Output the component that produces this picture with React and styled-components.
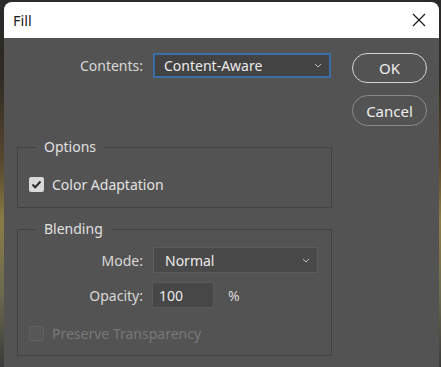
import React from "react";
import styled, { createGlobalStyle } from "styled-components";

const GlobalStyle = createGlobalStyle`
  html, body {
    margin: 0;
    padding: 0;
    height: 100%;
  }
  body {
    background: linear-gradient(180deg, #2a2a2a 0%, #2e2a24 20%, #5a4a30 45%, #8a7c46 60%, #6b6a50 80%, #3a3a3a 100%);
    font-family: "Noto Sans", "Open Sans", sans-serif;
    overflow: hidden;
  }
`;

const Dialog = styled.div`
  margin: 2px 2px 0 4px;
  height: 365px;
  display: flex;
  flex-direction: column;
  border-radius: 8px 8px 0 0;
  overflow: hidden;
  background: #535353;
`;

const TitleBar = styled.div`
  height: 36px;
  flex: none;
  background: #ffffff;
  display: flex;
  align-items: center;
  justify-content: space-between;
  padding: 0 13px 0 9px;
  font-size: 14.5px;
  color: #1c1c1c;
`;

const CloseButton = styled.button`
  border: none;
  background: none;
  padding: 0;
  width: 14px;
  height: 14px;
  display: flex;
  cursor: pointer;
`;

const Body = styled.div`
  flex: 1;
  display: flex;
  padding: 15px 12px 0 13px;
  gap: 20px;
`;

const LeftCol = styled.div`
  width: 315px;
  display: flex;
  flex-direction: column;
`;

const RightCol = styled.div`
  width: 75px;
  display: flex;
  flex-direction: column;
  gap: 12px;
`;

const Row = styled.div`
  display: flex;
  align-items: center;
  height: ${(p) => p.$h || 26}px;
  margin-top: ${(p) => p.$mt || 0}px;
`;

const Label = styled.span`
  width: ${(p) => p.$w}px;
  margin-right: ${(p) => p.$gap || 10}px;
  text-align: right;
  font-size: 14px;
  color: #d8d8d8;
`;

const Select = styled.div`
  box-sizing: border-box;
  width: ${(p) => p.$w}px;
  height: ${(p) => p.$h}px;
  display: flex;
  align-items: center;
  justify-content: space-between;
  padding: 0 7px 0 ${(p) => (p.$focus ? 9 : 11)}px;
  background: ${(p) => (p.$focus ? "#434343" : "#494949")};
  border: ${(p) => (p.$focus ? "2px solid #3b6ea6" : "1px solid #5c5c5c")};
  font-size: 14px;
  color: #ececec;
`;

const NumberField = styled.div`
  box-sizing: border-box;
  width: 62px;
  height: 26px;
  display: flex;
  align-items: center;
  padding-left: 6px;
  background: #474747;
  border: 1px solid #5a5a5a;
  font-size: 14px;
  color: #ececec;
`;

const Unit = styled.span`
  margin-left: 14px;
  font-size: 14px;
  color: #d8d8d8;
`;

const PillButton = styled.button`
  box-sizing: border-box;
  width: 75px;
  height: ${(p) => p.$h}px;
  border-radius: 16px;
  background: transparent;
  border: ${(p) => (p.$primary ? "1.5px solid #d4d4d4" : "1px solid #8a8a8a")};
  color: #eeeeee;
  font-family: inherit;
  font-size: 15px;
  padding: 0;
  cursor: pointer;
`;

const Group = styled.fieldset`
  margin: ${(p) => p.$mt}px 0 0;
  padding: 0 0 0 11px;
  border: 1px solid #424242;
  height: ${(p) => p.$h}px;
  box-sizing: border-box;
  display: flex;
  flex-direction: column;
`;

const Legend = styled.legend`
  margin-left: 7px;
  padding: 0 8px;
  font-size: 14px;
  line-height: 20px;
  color: #e0e0e0;
`;

const CheckRow = styled.label`
  display: flex;
  align-items: center;
  gap: 8px;
  margin-top: ${(p) => p.$mt}px;
  font-size: 14px;
  color: ${(p) => (p.$disabled ? "#787878" : "#e2e2e2")};
`;

const Box = styled.span`
  box-sizing: border-box;
  width: 15px;
  height: 15px;
  border-radius: 2px;
  display: flex;
  align-items: center;
  justify-content: center;
  background: ${(p) => (p.$checked ? "#d9d9d9" : "#575757")};
  border: ${(p) => (p.$checked ? "none" : "1px solid #606060")};
`;

const Chevron = () => (
  <svg width="8" height="5" viewBox="0 0 8 5">
    <polyline points="1,1 4,4 7,1" fill="none" stroke="#bdbdbd" strokeWidth="1" />
  </svg>
);

export default function App() {
  return (
    <>
      <GlobalStyle />
      <Dialog>
        <TitleBar>
          <span>Fill</span>
          <CloseButton aria-label="Close">
            <svg width="14" height="14" viewBox="0 0 14 14">
              <path d="M1 1 L13 13 M13 1 L1 13" stroke="#1a1a1a" strokeWidth="1.2" />
            </svg>
          </CloseButton>
        </TitleBar>
        <Body>
          <LeftCol>
            <Row $h={25}>
              <Label $w={126}>Contents:</Label>
              <Select $w={178} $h={25} $focus>
                <span>Content-Aware</span>
                <Chevron />
              </Select>
            </Row>
            <Group $mt={59} $h={71}>
              <Legend>Options</Legend>
              <CheckRow $mt={18}>
                <Box $checked>
                  <svg width="11" height="9" viewBox="0 0 11 9">
                    <polyline points="1.5,4.5 4.2,7.2 9.5,1.5" fill="none" stroke="#2a2a2a" strokeWidth="2" />
                  </svg>
                </Box>
                Color Adaptation
              </CheckRow>
            </Group>
            <Group $mt={11} $h={137}>
              <Legend>Blending</Legend>
              <Row $mt={8}>
                <Label $w={114}>Mode:</Label>
                <Select $w={165} $h={26}>
                  <span>Normal</span>
                  <Chevron />
                </Select>
              </Row>
              <Row $mt={9}>
                <Label $w={114} $gap={9}>Opacity:</Label>
                <NumberField>100</NumberField>
                <Unit>%</Unit>
              </Row>
              <CheckRow $mt={16} $disabled>
                <Box />
                Preserve Transparency
              </CheckRow>
            </Group>
          </LeftCol>
          <RightCol>
            <PillButton $primary $h={30}>OK</PillButton>
            <PillButton $h={31}>Cancel</PillButton>
          </RightCol>
        </Body>
      </Dialog>
    </>
  );
}
